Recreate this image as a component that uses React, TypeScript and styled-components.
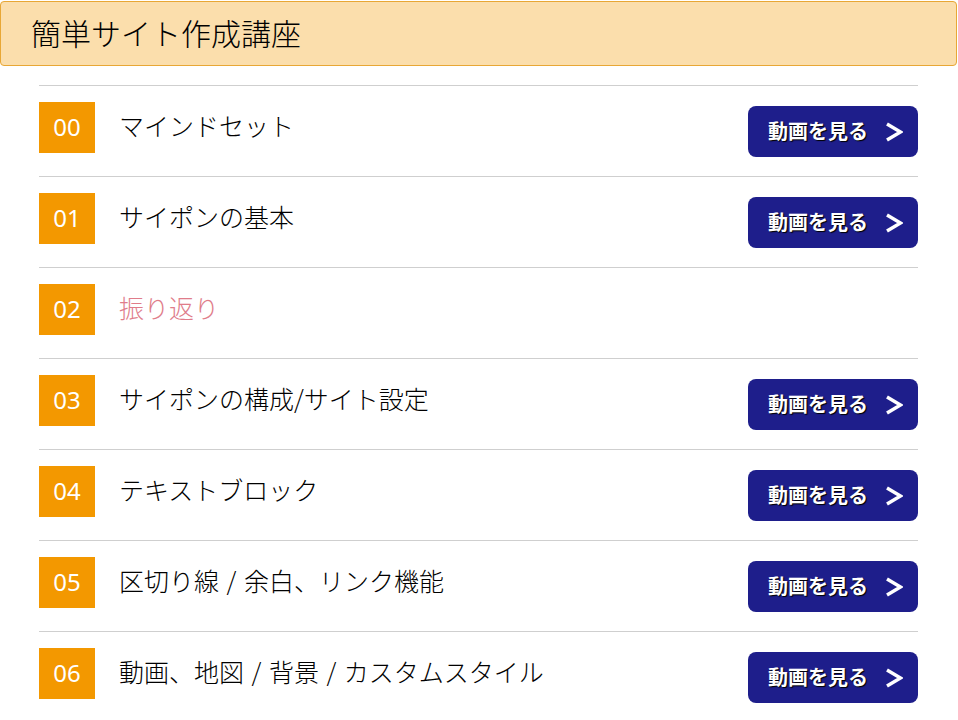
import React, { FC } from 'react'
import styled, { createGlobalStyle } from 'styled-components'

const GlobalStyle = createGlobalStyle`
  body {
    margin: 0;
    background: #fff;
    font-family: "Noto Sans CJK JP", "Noto Sans", sans-serif;
  }
`;

type Lesson = { no: string; title: string; locked?: boolean };

const lessons: Lesson[] = [
  { no: '00', title: 'マインドセット' },
  { no: '01', title: 'サイポンの基本' },
  { no: '02', title: '振り返り', locked: true },
  { no: '03', title: 'サイポンの構成/サイト設定' },
  { no: '04', title: 'テキストブロック' },
  { no: '05', title: '区切り線 / 余白、リンク機能' },
  { no: '06', title: '動画、地図 / 背景 / カスタムスタイル' },
];

const App: FC = () => (
  <Page>
    <GlobalStyle />
    <Header>
      <Title>簡単サイト作成講座</Title>
    </Header>
    <List>
      {lessons.map(l => (
        <Row key={l.no}>
          <Badge>{l.no}</Badge>
          <LessonTitle locked={l.locked}>{l.title}</LessonTitle>
          {!l.locked && (
            <WatchButton href="#">
              <span>動画を見る</span>
              <Chevron viewBox="0 0 18 20">
                <polyline points="2 2 15.5 10 2 18" />
              </Chevron>
            </WatchButton>
          )}
        </Row>
      ))}
    </List>
  </Page>
)

const Page = styled.div`
  width: 958px;
  height: 720px;
  overflow: hidden;
`;

const Header = styled.div`
  margin: 1px 1px 0 0;
  height: 63px;
  box-sizing: content-box;
  background: #fbdeac;
  border: 1px solid #e8a735;
  border-radius: 4px;
  display: flex;
  align-items: center;
  padding-left: 30px;
`;

const Title = styled.h1`
  margin: 0 0 3px 0;
  font-size: 30px;
  font-weight: 300;
  color: #000;
`;

const List = styled.div`
  margin: 19px 40px 0 39px;
`;

const Row = styled.div`
  height: 90px;
  border-top: 1px solid #cfcfcf;
  display: flex;
  align-items: flex-start;
`;

const Badge = styled.div`
  margin-top: 16px;
  width: 56px;
  height: 51px;
  background: #f39800;
  color: #fff;
  font-family: "Noto Sans", sans-serif;
  font-size: 24px;
  display: flex;
  align-items: center;
  justify-content: center;
  padding-bottom: 2px;
  box-sizing: border-box;
`;

const LessonTitle = styled.div<{ locked?: boolean }>`
  margin: 22px 0 0 24px;
  flex: 1;
  font-size: 25px;
  font-weight: 300;
  line-height: 34px;
  word-spacing: 2px;
  color: ${props => (props.locked ? '#e07c8a' : '#000')};
`;

const WatchButton = styled.a`
  margin-top: 20px;
  width: 170px;
  height: 51px;
  box-sizing: border-box;
  background: #1e1e8b;
  border-radius: 8px;
  display: flex;
  align-items: center;
  padding: 0 14px 3px 20px;
  gap: 17px;
  text-decoration: none;
  color: #fff;
  font-size: 20px;
  font-weight: 700;
  text-shadow: 1px 1px 1px #000;
`;

const Chevron = styled.svg`
  width: 18px;
  height: 20px;
  margin-top: 3px;
  fill: none;
  stroke: #fff;
  stroke-width: 3.5px;
`;

export default App;
